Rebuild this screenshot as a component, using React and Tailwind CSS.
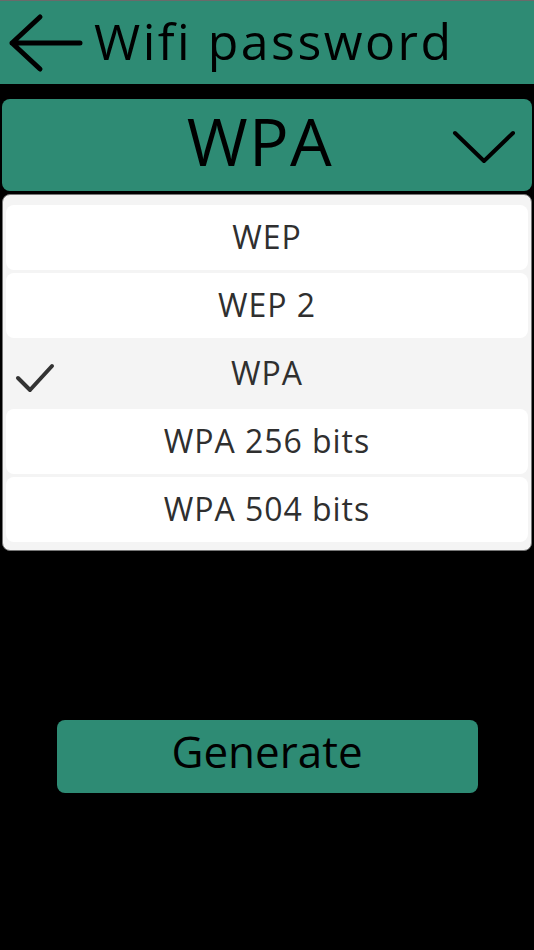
import React, { useState } from "react";

const OPTIONS = ["WEP", "WEP 2", "WPA", "WPA 256 bits", "WPA 504 bits"];

export default function App() {
  const [selected, setSelected] = useState("WPA");

  return (
    <div
      className="min-h-screen w-full bg-black flex flex-col"
      style={{ fontFamily: '"Open Sans", "Noto Sans", sans-serif' }}
    >
      {/* Header */}
      <div className="border-t border-[#6a6a6a] h-[84px] bg-[#2e8b74] flex items-center pl-[8px] gap-[10px]">
        <svg width="76" height="60" viewBox="0 0 76 60" fill="none" stroke="black" strokeWidth="5" strokeLinecap="round" strokeLinejoin="round">
          <path d="M32 4L4 30l28 26M4 30h68" />
        </svg>
        <span className="text-[50px] leading-none tracking-[0.05em] text-black pb-[4px]">Wifi password</span>
      </div>

      {/* Select */}
      <div className="mt-[15px] mx-[2px] h-[92px] rounded-lg bg-[#2e8b74] relative flex items-center justify-center">
        <span className="text-[66px] leading-none tracking-[0.02em] text-black pr-[14px] pb-[10px]">{selected}</span>
        <svg className="absolute right-[16px] top-[31px]" width="64" height="34" viewBox="0 0 64 34" fill="none" stroke="black" strokeWidth="4" strokeLinecap="round" strokeLinejoin="round">
          <path d="M3 3l29 28L61 3" />
        </svg>
      </div>

      {/* Options list */}
      <div className="mt-[3px] mx-[2px] rounded-lg border border-[#777] bg-[#f4f4f4] px-[3px] pt-[10px] pb-[8px] flex flex-col gap-[3px] shadow-md">
        {OPTIONS.map((opt) => {
          const active = opt === selected;
          return (
            <button
              key={opt}
              onClick={() => setSelected(opt)}
              className={`relative h-[65px] rounded-lg flex items-center justify-center text-[32px] tracking-[0.03em] text-[#2f2f2f] ${
                active ? "bg-[#f4f4f4]" : "bg-white"
              }`}
            >
              {active && (
                <svg className="absolute left-[9px] top-[22px]" width="40" height="30" viewBox="0 0 40 30" fill="none" stroke="#333" strokeWidth="4" strokeLinecap="round" strokeLinejoin="round">
                  <path d="M3 15l12 12L37 3" />
                </svg>
              )}
              <span className="pb-[2px]">{opt}</span>
            </button>
          );
        })}
      </div>

      {/* Generate */}
      <div className="flex justify-center mt-[169px]">
        <button className="w-[421px] h-[73px] rounded-lg bg-[#2e8b74] text-[44px] text-black leading-none pb-[12px]">
          Generate
        </button>
      </div>
    </div>
  );
}
